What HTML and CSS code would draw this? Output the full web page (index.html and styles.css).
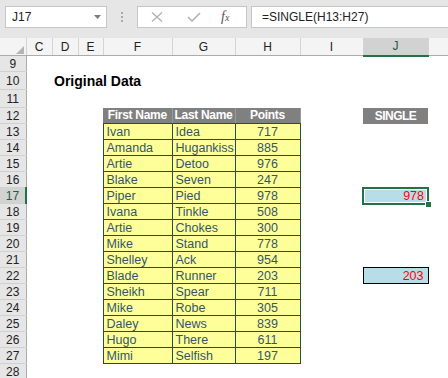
FILE: index.html
```html
<!DOCTYPE html>
<html lang="en">

<head>
    <meta charset="utf-8">
    <title>SINGLE</title>
    <link rel="stylesheet" href="styles.css">
</head>

<body>

    <div class="formula-bar">
        <div class="namebox">
            <span>J17</span>
            <svg class="drop" width="7" height="4" viewBox="0 0 7 4"><path d="M0 0H7L3.5 4Z" fill="#7a7a7a"/></svg>
        </div>
        <div class="grip"><i></i><i></i><i></i></div>
        <div class="fxbox">
            <svg width="12" height="10" viewBox="0 0 12 10"><path d="M1 0.5L11 9.5M11 0.5L1 9.5" stroke="#b3b3b3" stroke-width="1.4" fill="none"/></svg>
            <svg width="14" height="10" viewBox="0 0 14 10"><path d="M1 5L5 9L13 1" stroke="#b3b3b3" stroke-width="1.6" fill="none"/></svg>
            <span class="fx">f<small>x</small></span>
        </div>
        <div class="formula">=SINGLE(H13:H27)</div>
    </div>

    <table class="sheet">
        <colgroup>
            <col class="w-hd"><col class="w-c"><col class="w-d"><col class="w-e"><col class="w-f">
            <col class="w-g"><col class="w-h"><col class="w-i"><col class="w-j"><col class="w-k">
        </colgroup>
        <thead>
            <tr class="cols">
                <th class="corner"><svg width="8" height="8" viewBox="0 0 8 8"><path d="M8 0V8H0Z" fill="#b5b5b5"/></svg></th>
                <th>C</th><th>D</th><th>E</th><th>F</th><th>G</th><th>H</th><th>I</th><th class="on">J</th><th></th>
            </tr>
        </thead>
        <tbody>
            <tr><th>9</th><td colspan="9"></td></tr>
            <tr class="tall"><th>10</th><td></td><td class="title" colspan="8">Original Data</td></tr>
            <tr class="tall"><th>11</th><td colspan="9"></td></tr>
            <tr>
                <th>12</th><td colspan="3"></td>
                <td class="head">First Name</td><td class="head">Last Name</td><td class="head">Points</td>
                <td></td><td class="result-head">SINGLE</td><td></td>
            </tr>
            <tr><th>13</th><td colspan="3"></td><td class="d">Ivan</td><td class="d">Idea</td><td class="d num">717</td><td></td><td></td><td></td></tr>
            <tr><th>14</th><td colspan="3"></td><td class="d">Amanda</td><td class="d">Hugankiss</td><td class="d num">885</td><td></td><td></td><td></td></tr>
            <tr><th>15</th><td colspan="3"></td><td class="d">Artie</td><td class="d">Detoo</td><td class="d num">976</td><td></td><td></td><td></td></tr>
            <tr><th>16</th><td colspan="3"></td><td class="d">Blake</td><td class="d">Seven</td><td class="d num">247</td><td></td><td></td><td></td></tr>
            <tr><th class="on">17</th><td colspan="3"></td><td class="d">Piper</td><td class="d">Pied</td><td class="d num">978</td><td></td><td class="result active">978</td><td></td></tr>
            <tr><th>18</th><td colspan="3"></td><td class="d">Ivana</td><td class="d">Tinkle</td><td class="d num">508</td><td></td><td></td><td></td></tr>
            <tr><th>19</th><td colspan="3"></td><td class="d">Artie</td><td class="d">Chokes</td><td class="d num">300</td><td></td><td></td><td></td></tr>
            <tr><th>20</th><td colspan="3"></td><td class="d">Mike</td><td class="d">Stand</td><td class="d num">778</td><td></td><td></td><td></td></tr>
            <tr><th>21</th><td colspan="3"></td><td class="d">Shelley</td><td class="d">Ack</td><td class="d num">954</td><td></td><td></td><td></td></tr>
            <tr><th>22</th><td colspan="3"></td><td class="d">Blade</td><td class="d">Runner</td><td class="d num">203</td><td></td><td class="result boxed">203</td><td></td></tr>
            <tr><th>23</th><td colspan="3"></td><td class="d">Sheikh</td><td class="d">Spear</td><td class="d num">711</td><td></td><td></td><td></td></tr>
            <tr><th>24</th><td colspan="3"></td><td class="d">Mike</td><td class="d">Robe</td><td class="d num">305</td><td></td><td></td><td></td></tr>
            <tr><th>25</th><td colspan="3"></td><td class="d">Daley</td><td class="d">News</td><td class="d num">839</td><td></td><td></td><td></td></tr>
            <tr><th>26</th><td colspan="3"></td><td class="d">Hugo</td><td class="d">There</td><td class="d num">611</td><td></td><td></td><td></td></tr>
            <tr><th>27</th><td colspan="3"></td><td class="d">Mimi</td><td class="d">Selfish</td><td class="d num">197</td><td></td><td></td><td></td></tr>
            <tr><th>28</th><td colspan="9"></td></tr>
        </tbody>
    </table>

</body>

</html>
```

FILE: styles.css
```css
body {
    margin: 0;
    width: 448px;
    height: 378px;
    overflow: hidden;
    background-color: white;
    font-family: "Liberation Sans", Arial, sans-serif;
}

/* formula bar */

.formula-bar {
    display: flex;
    align-items: flex-start;
    box-sizing: border-box;
    height: 38px;
    padding: 6px 0 0 5px;
    background-color: #e6e6e6;
}

.namebox,
.fxbox,
.formula {
    box-sizing: border-box;
    height: 22px;
    background-color: white;
    border: 1px solid #c6c6c6;
    font-size: 12px;
    color: #222;
}

.namebox {
    display: flex;
    align-items: center;
    justify-content: space-between;
    width: 102px;
    padding: 0 5px 0 6px;
}

.grip {
    display: flex;
    flex-direction: column;
    align-items: center;
    gap: 2px;
    width: 30px;
    padding-top: 6px;
}

.grip i {
    width: 2px;
    height: 2px;
    background-color: #a9a9a9;
}

.fxbox {
    display: flex;
    align-items: center;
    width: 110px;
    padding-left: 13px;
}

.fxbox svg:nth-child(2) {
    margin-left: 24px;
}

.fx {
    margin-left: 20px;
    font-family: "Liberation Serif", "Times New Roman", serif;
    font-style: italic;
    font-size: 14px;
    color: #555;
}

.fx small {
    font-size: 10px;
}

.formula {
    flex: 1;
    margin-left: 4px;
    border-right: none;
    padding-left: 10px;
    line-height: 20px;
}

/* grid */

.sheet {
    border-collapse: collapse;
    table-layout: fixed;
    width: 448px;
}

.w-hd { width: 26px; }
.w-c { width: 26px; }
.w-d { width: 26px; }
.w-e { width: 25px; }
.w-f { width: 69px; }
.w-g { width: 63px; }
.w-h { width: 65px; }
.w-i { width: 63px; }
.w-j { width: 65px; }
.w-k { width: 20px; }

tr {
    height: 16px;
}

tr.tall {
    height: 18px;
}

th,
td {
    padding: 0;
    white-space: nowrap;
    overflow: hidden;
    line-height: 14px;
}

.cols th {
    height: 16px;
    background-color: #f4f4f4;
    border-right: 1px solid #d4d4d4;
    border-bottom: 1px solid #ababab;
    font-weight: normal;
    font-size: 12px;
    color: #222;
}

.cols th.corner {
    text-align: right;
    vertical-align: bottom;
    padding: 0 2px 1px 0;
}

.cols th.corner svg {
    display: block;
    margin-left: auto;
}

.cols th.on {
    background-color: #d2d2d2;
    border-bottom: 2px solid #217346;
    color: #1b5e3a;
}

tbody th {
    background-color: #e6e6e6;
    border-right: 1px solid #ababab;
    border-bottom: 1px solid #d0d0d0;
    font-weight: normal;
    font-size: 12px;
    color: #222;
}

tbody th.on {
    background-color: #d2d2d2;
    border-right: 2px solid #217346;
    color: #1b5e3a;
}

.title {
    padding-left: 2px;
    font-weight: bold;
    font-size: 14px;
}

.head {
    background-color: #808080;
    color: white;
    font-weight: bold;
    font-size: 12px;
    letter-spacing: -0.3px;
    text-align: center;
    border-right: 1px solid #999;
    border-bottom: 1px solid #1e4e4e;
}

.d {
    padding-left: 3px;
    background-color: #ffff99;
    border: 1px solid #1e4e4e;
    font-size: 12.5px;
    color: #34566a;
}

.d.num {
    padding-left: 0;
    text-align: center;
}

.result-head {
    background-color: #808080;
    color: white;
    font-weight: bold;
    font-size: 12px;
    letter-spacing: -0.5px;
    text-align: center;
}

.result {
    padding-right: 4px;
    background-color: #b7dee8;
    text-align: right;
    font-size: 12.5px;
    color: #ff0000;
}

.result.active {
    position: relative;
    overflow: visible;
    outline: 2px solid #217346;
    outline-offset: -1px;
    box-shadow: inset 0 0 0 2px white;
}

.result.active::after {
    content: "";
    position: absolute;
    right: -4px;
    bottom: -4px;
    width: 5px;
    height: 5px;
    background-color: #217346;
    border: 1px solid white;
}

.result.boxed {
    border: 1px solid black;
}
```
